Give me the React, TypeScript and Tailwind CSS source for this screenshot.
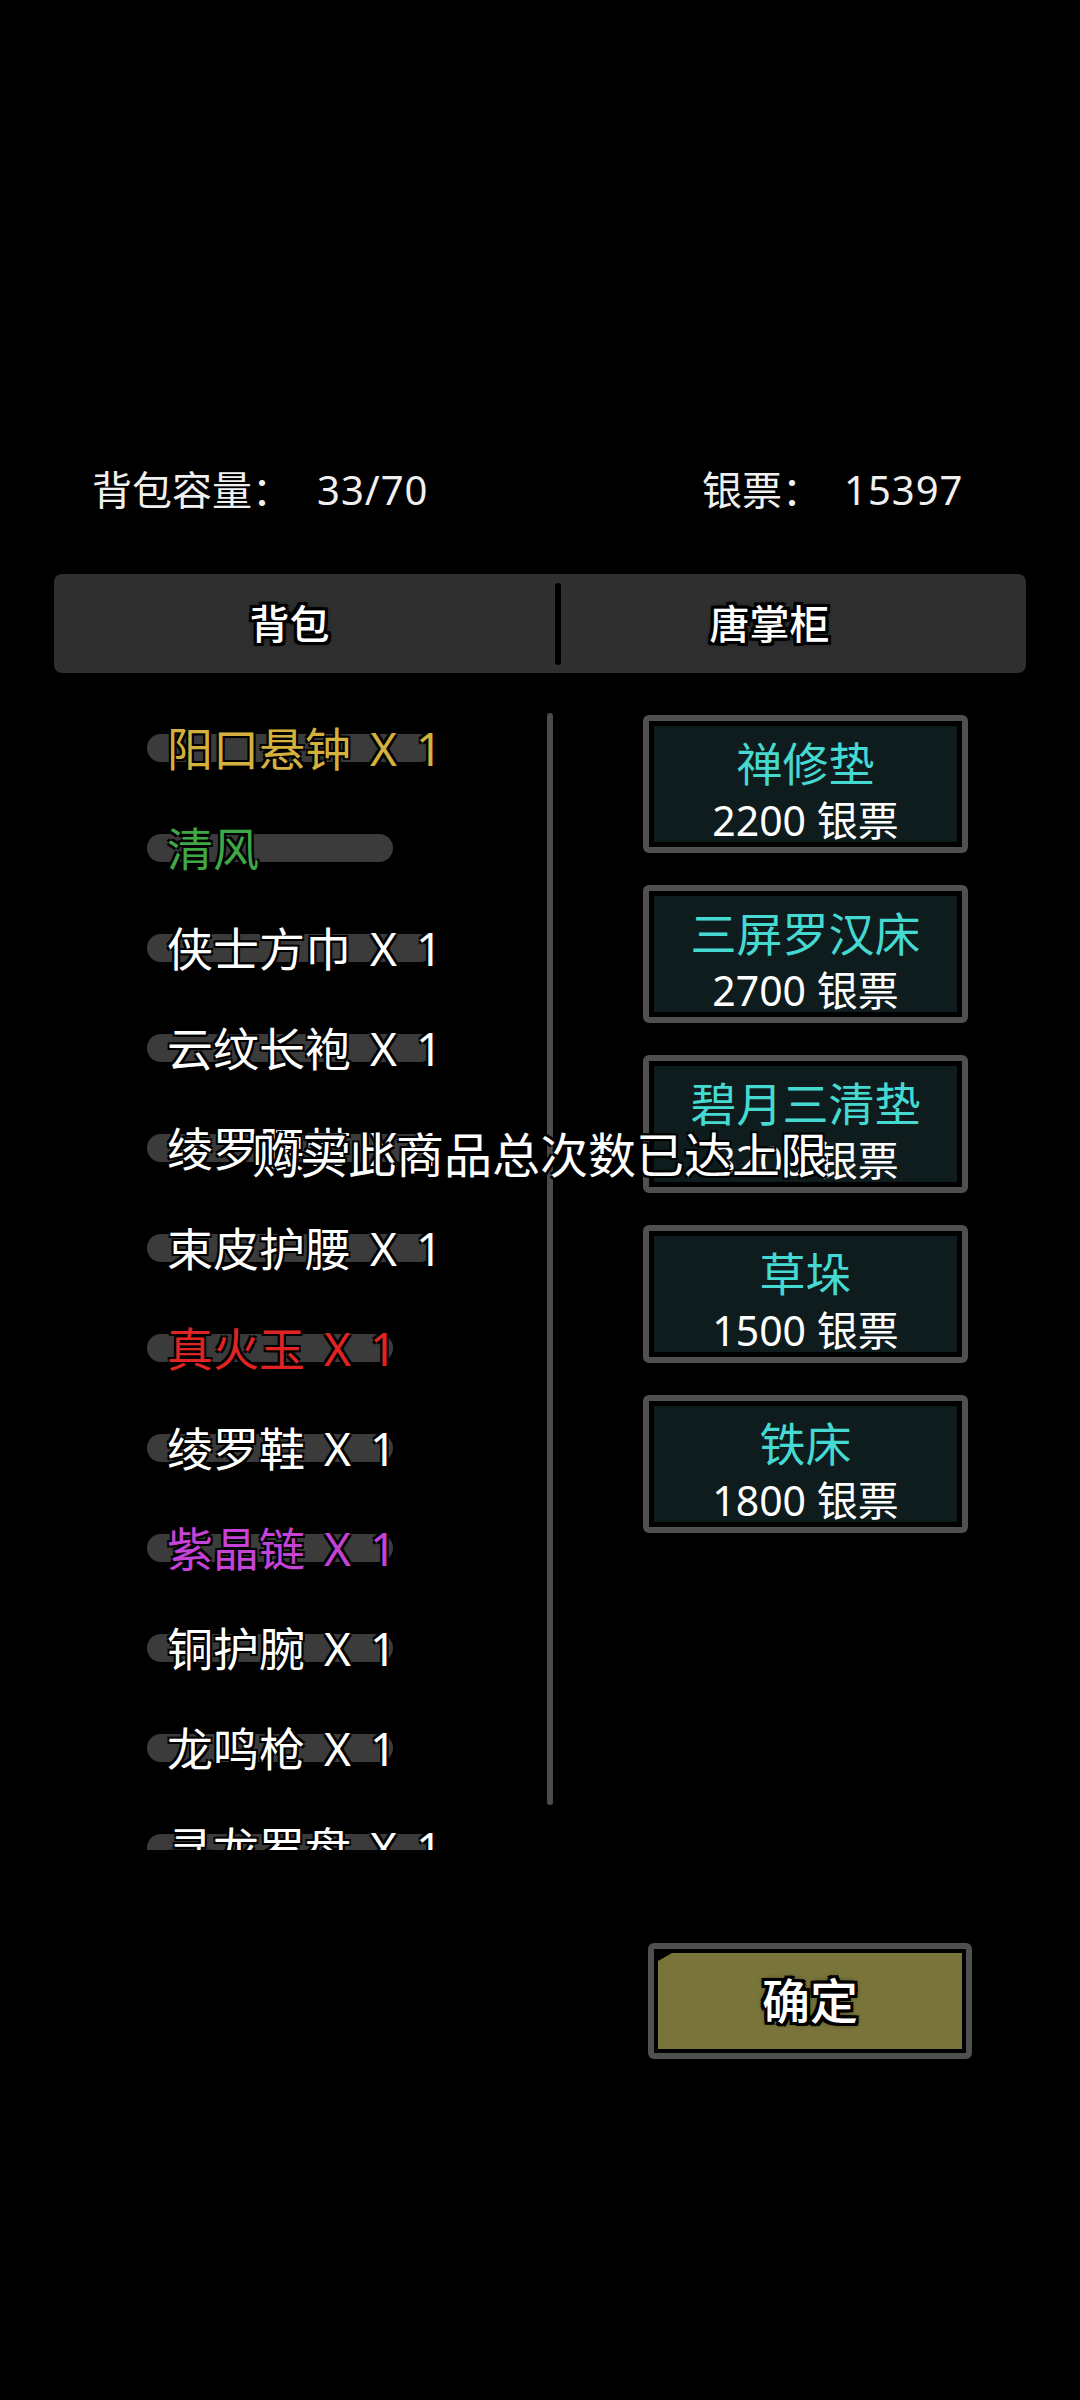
const FONT = "[font-family:'Noto_Sans','Noto_Sans_CJK_SC',sans-serif]";

const items = [
  { name: "阳口悬钟 X 1", color: "text-[#d4b13c]" },
  { name: "清风", color: "text-[#3fa846]" },
  { name: "侠士方巾 X 1", color: "text-white" },
  { name: "云纹长袍 X 1", color: "text-white" },
  { name: "绫罗腰带 X 1", color: "text-white" },
  { name: "束皮护腰 X 1", color: "text-white" },
  { name: "真火玉 X 1", color: "text-[#e02424]" },
  { name: "绫罗鞋 X 1", color: "text-white" },
  { name: "紫晶链 X 1", color: "text-[#c542d6]" },
  { name: "铜护腕 X 1", color: "text-white" },
  { name: "龙鸣枪 X 1", color: "text-white" },
  { name: "寻龙罗盘 X 1", color: "text-white" },
];

const goods = [
  { name: "禅修垫", price: 2200 },
  { name: "三屏罗汉床", price: 2700 },
  { name: "碧月三清垫", price: 3200 },
  { name: "草垛", price: 1500 },
  { name: "铁床", price: 1800 },
];

const thinOutline =
  "[text-shadow:-2px_-2px_0_#000,2px_-2px_0_#000,-2px_2px_0_#000,2px_2px_0_#000,0_0_3px_#000]";
const thickOutline =
  "[text-shadow:-3px_-3px_0_#000,3px_-3px_0_#000,-3px_3px_0_#000,3px_3px_0_#000,0_-3px_0_#000,0_3px_0_#000,-3px_0_0_#000,3px_0_0_#000,0_0_6px_#000]";

const ItemRow = ({ name, color }: { name: string; color: string }) => (
  <div className="h-[100px] flex items-center pl-[147px]">
    <div className="relative">
      <div className="absolute left-0 right-[8px] top-1/2 -translate-y-1/2 h-[28px] min-w-[246px] rounded-full bg-[#3b3b3b]" />
      <span
        className={`relative block pl-[20px] text-[46px] leading-[60px] whitespace-pre [word-spacing:7px] ${color} ${thinOutline}`}
      >
        {name}
      </span>
    </div>
  </div>
);

const GoodsCard = ({ name, price }: { name: string; price: number }) => (
  <div className="w-[325px] h-[138px] rounded-[6px] border-[6px] border-[#505050] bg-black p-[5px]">
    <div className="h-full bg-[#0e1c1d] flex flex-col items-center">
      <div className="mt-[13px] text-[46px] leading-[48px] text-[#45d9d2]">{name}</div>
      <div className="mt-[9px] text-[41px] leading-[48px] text-white">{price} 银票</div>
    </div>
  </div>
);

export default function App() {
  return (
    <div className={`relative w-[1080px] h-[2400px] bg-black pt-[466px] ${FONT}`}>
      {/* header */}
      <div className="flex text-[40px] leading-[48px] text-[#f0f0f0]">
        <div className="w-[702px] pl-[92px] flex">
          <span>背包容量：</span>
          <span className="ml-[25px] tracking-[1px]">33/70</span>
        </div>
        <div className="flex">
          <span>银票：</span>
          <span className="ml-[22px] tracking-[1px]">15397</span>
        </div>
      </div>

      {/* tabs */}
      <div className="mt-[60px] ml-[54px] w-[972px] h-[99px] rounded-[8px] bg-[#2f2f2f] flex items-center">
        <div className={`w-[501px] pr-[30px] text-center text-[40px] font-medium text-white ${thickOutline}`}>背包</div>
        <div className="w-[6px] h-[82px] rounded-full bg-black" />
        <div className={`flex-1 pr-[48px] text-center text-[40px] font-medium text-white ${thickOutline}`}>唐掌柜</div>
      </div>

      {/* main */}
      <div className="mt-[25px] flex">
        <div className="relative w-[600px] h-[1152px] overflow-hidden">
          {items.map((it) => (
            <ItemRow key={it.name} name={it.name} color={it.color} />
          ))}
          <div className="absolute left-[547px] top-[15px] w-[6px] h-[1092px] rounded-full bg-[#4b4b4b]" />
        </div>
        <div className="ml-[43px] pt-[17px] flex flex-col gap-[32px]">
          {goods.map((g) => (
            <GoodsCard key={g.name} name={g.name} price={g.price} />
          ))}
        </div>
      </div>

      {/* confirm */}
      <div className="mt-[93px] ml-[648px] w-[324px] h-[116px] rounded-[6px] border-[6px] border-[#505050] bg-black p-[4px]">
        <div className="h-full bg-[#78743a] flex items-center justify-center [clip-path:polygon(14px_0,100%_0,100%_100%,0_100%,0_8px)]">
          <span className={`text-[48px] font-medium text-white leading-none ${thickOutline}`}>确定</span>
        </div>
      </div>

      {/* toast */}
      <div className={`absolute left-0 right-0 top-[1124px] text-center text-[48px] leading-[62px] text-white ${thinOutline}`}>
        购买此商品总次数已达上限
      </div>
    </div>
  );
}
